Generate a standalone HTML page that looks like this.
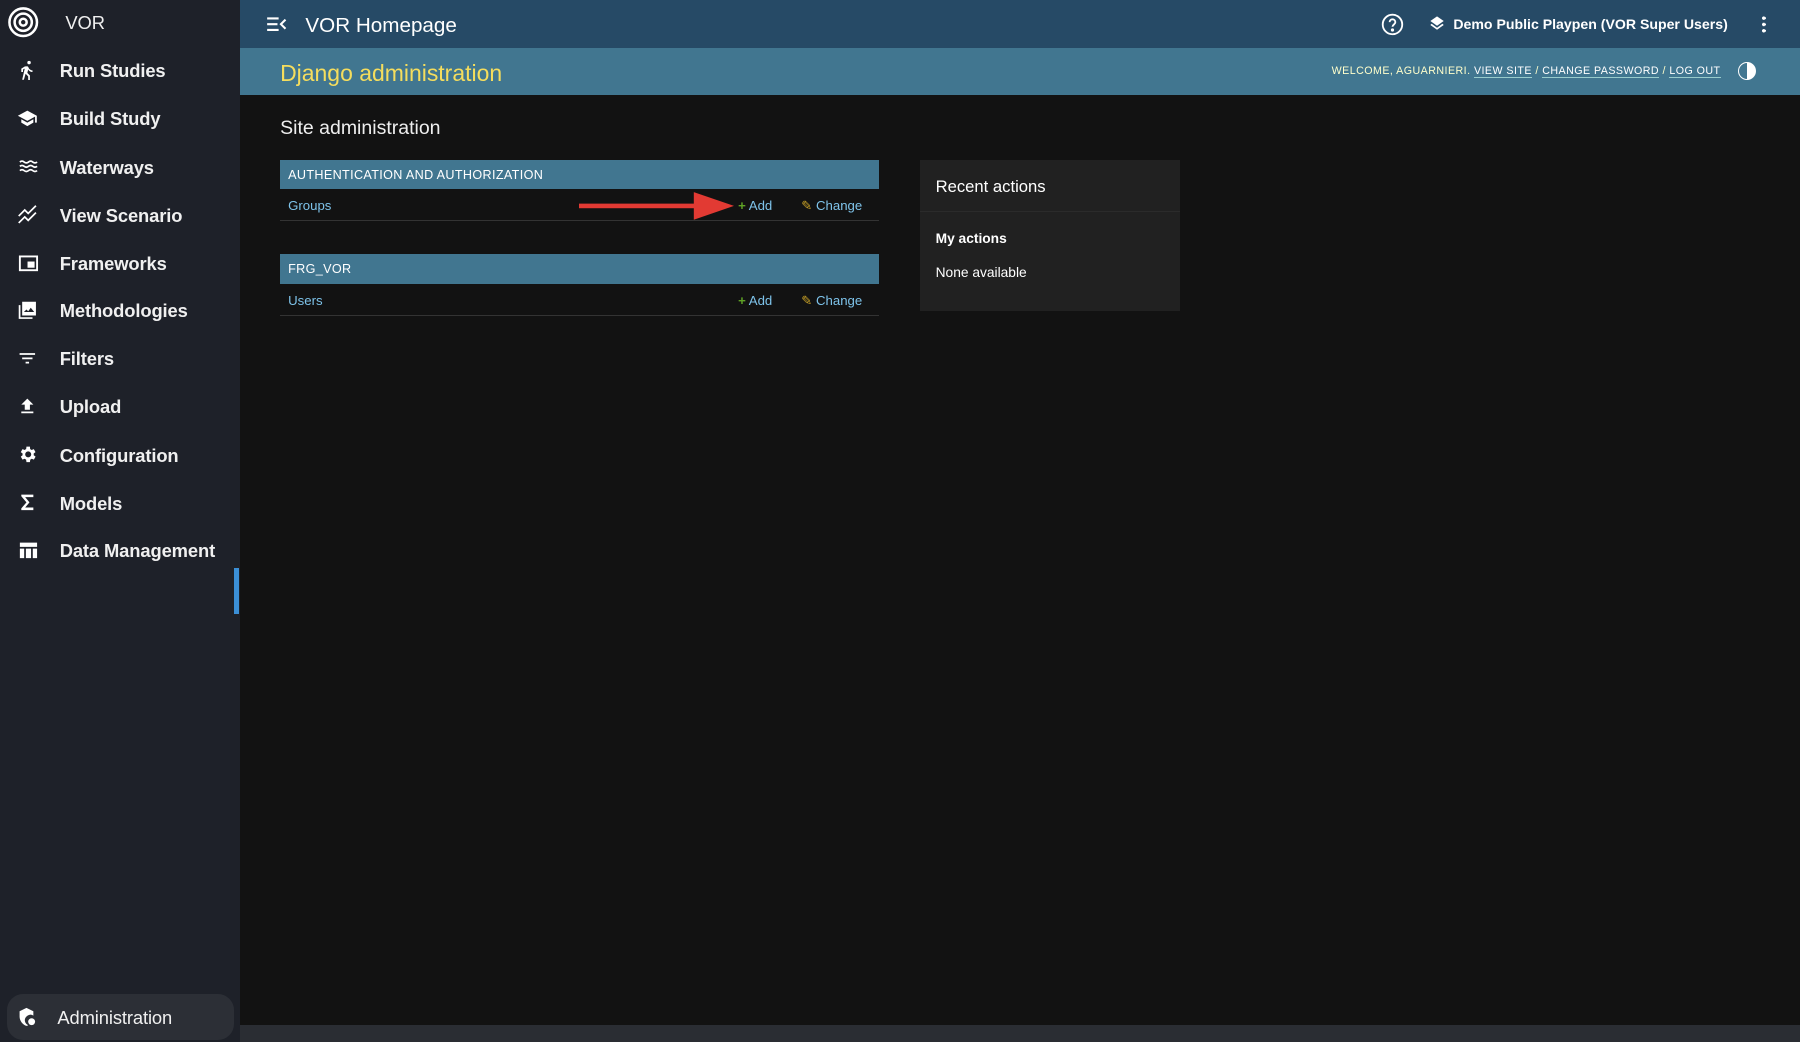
<!DOCTYPE html>
<html><head><meta charset="utf-8"><style>
html{zoom:1.148}
body{margin:0;width:1568px;height:908px;background:#121212;font-family:"Liberation Sans",sans-serif;position:relative;overflow:hidden;color:#fff}
.sb{position:absolute;left:0;top:0;width:209px;height:908px;background:#1e2129}
.it{position:absolute;left:0;height:40px;line-height:42px;font-size:16px;font-weight:bold;color:#f0f0f0;width:209px}
.it span{position:absolute;left:52px;letter-spacing:-.1px}
.it svg{position:absolute;left:15px;top:11px}
.top{position:absolute;left:209px;top:0;right:0;height:42px;background:#264a66}
.hdr{position:absolute;left:209px;top:42px;right:0;height:41px;background:#417690}
a{color:#7ec3ea;text-decoration:none}
.mod{position:absolute;left:244px;width:522px}
.cap{height:26px;line-height:27px;background:#417690;color:#fff;font-size:11px;padding-left:7px;letter-spacing:.3px}
.row{height:27px;line-height:29px;border-bottom:1px solid #333;font-size:11.5px;position:relative}
.row .n{position:absolute;left:7px}
.row .ad{position:absolute;left:643px;margin-left:-244px}
.row .ch{position:absolute;left:698px;margin-left:-244px}
.plus{color:#5fa225;font-weight:bold}
.pen{color:#c9a227}
</style></head><body>
<div class="sb">
 <div class="it" style="top:0;height:38px;line-height:40px"><svg width="30" height="30" viewBox="0 0 30 30" style="left:5px;top:4px" fill="none" stroke="#fff" stroke-width="2.2"><circle cx="15" cy="15" r="12"/><circle cx="15" cy="15" r="7.5"/><circle cx="15" cy="15" r="3"/></svg><span style="left:57px;font-weight:normal">VOR</span></div>
 <div class="it" style="top:41px"><svg width="18" height="18" viewBox="0 0 24 24" fill="#fff"><circle cx="14" cy="3" r="2"/><path d="M10 7l-5 3v4h2v-3l2-1-3 13h2l2-7 3 3v5h2v-6l-3-3 1-4c1 2 3 3 5 3v-2c-2 0-3-1-4-2l-1-2c-1-1-2-1-3 0z"/></svg><span>Run Studies</span></div>
 <div class="it" style="top:83px"><svg width="18" height="18" viewBox="0 0 24 24" fill="#fff"><path d="M12 3L1 9l11 6 9-5v7h2V9zM5 13v4l7 4 7-4v-4l-7 4z"/></svg><span>Build Study</span></div>
 <div class="it" style="top:125px"><svg width="20" height="18" viewBox="0 0 24 24" fill="none" stroke="#fff" stroke-width="2"><path d="M2 7q2.5-2 5 0t5 0 5 0 5 0M2 12q2.5-2 5 0t5 0 5 0 5 0M2 17q2.5-2 5 0t5 0 5 0 5 0"/></svg><span>Waterways</span></div>
 <div class="it" style="top:167px"><svg width="18" height="18" viewBox="0 0 24 24" fill="none" stroke="#fff" stroke-width="2"><path d="M2 14l7-7 4 4 9-9M2 22l7-7 4 4 9-9"/></svg><span>View Scenario</span></div>
 <div class="it" style="top:209px"><svg width="20" height="18" viewBox="0 0 24 24" fill="none" stroke="#fff" stroke-width="2.2"><rect x="2" y="4" width="20" height="16"/><rect x="12" y="11" width="6" height="5" fill="#fff"/></svg><span>Frameworks</span></div>
 <div class="it" style="top:250px"><svg width="18" height="18" viewBox="0 0 24 24" fill="#fff"><path d="M6 2h16v16H6zM8 14h12l-4-5-3 4-2-2zM2 6h2v14h14v2H2z"/></svg><span>Methodologies</span></div>
 <div class="it" style="top:292px"><svg width="18" height="18" viewBox="0 0 24 24" fill="#fff"><path d="M3 6h18v2H3zM6 11h12v2H6zM10 16h4v2h-4z"/></svg><span>Filters</span></div>
 <div class="it" style="top:334px"><svg width="18" height="18" viewBox="0 0 24 24" fill="#fff"><path d="M9 16h6v-6h4l-7-7-7 7h4zM5 18h14v2H5z"/></svg><span>Upload</span></div>
 <div class="it" style="top:376px"><svg width="18" height="18" viewBox="0 0 24 24" fill="#fff"><path d="M19.4 13a7.5 7.5 0 000-2l2.1-1.6-2-3.5-2.5 1a7 7 0 00-1.7-1L15 3h-4l-.4 2.9a7 7 0 00-1.7 1l-2.5-1-2 3.5L6.5 11a7.5 7.5 0 000 2l-2.1 1.6 2 3.5 2.5-1a7 7 0 001.7 1L11 21h4l.4-2.9a7 7 0 001.7-1l2.5 1 2-3.5zM13 15.5a3.5 3.5 0 110-7 3.5 3.5 0 010 7z"/></svg><span>Configuration</span></div>
 <div class="it" style="top:418px"><svg width="18" height="18" viewBox="0 0 24 24" fill="#fff"><path d="M5 3h14v3H9.5l5 6-5 6H19v3H5v-2l6-7-6-7z"/></svg><span>Models</span></div>
 <div class="it" style="top:459px"><svg width="20" height="18" viewBox="0 0 24 24" fill="#fff"><path d="M2 3h20v5H2zM2 10h5v11H2zM9 10h6v11H9zM17 10h5v11h-5z"/></svg><span>Data Management</span></div>
 <div style="position:absolute;left:204px;top:495px;width:4px;height:40px;background:#3b8fd6"></div>
 <div style="position:absolute;left:6px;top:866px;width:198px;height:40px;background:#2c2f36;border-radius:14px"></div>
 <div class="it" style="top:866px"><svg width="18" height="18" viewBox="0 0 24 24" fill="#fff" style="left:15px"><path d="M11 1L3 5v6c0 5 3.5 9.5 8 11 1-.3 1.5-.6 2-1a6 6 0 01-2-10 6 6 0 018-1V5z"/><circle cx="17" cy="17" r="4"/></svg><span style="left:50px;font-weight:normal">Administration</span></div>
</div>
<div class="top">
 <svg style="position:absolute;left:23px;top:13px" width="18" height="16" viewBox="0 0 18 16" fill="none" stroke="#fff" stroke-width="1.8"><path d="M1 3h10M1 8h9M1 13h10M17 4l-4 4 4 4"/></svg>
 <div style="position:absolute;left:57px;top:12px;font-size:18px">VOR Homepage</div>
 <svg style="position:absolute;left:994px;top:11px" width="20" height="20" viewBox="0 0 20 20" fill="none" stroke="#fff" stroke-width="1.6"><circle cx="10" cy="10" r="8.5"/><path d="M7.5 8a2.5 2.5 0 115 0c0 2-2.5 2-2.5 4"/><circle cx="10" cy="14.8" r=".6" fill="#fff"/></svg>
 <svg style="position:absolute;left:1036px;top:13px" width="14" height="14" viewBox="0 0 24 24" fill="#fff"><path d="M12 2L2 9l10 7 10-7zM4 13l-2 2 10 7 10-7-2-2-8 6z"/></svg>
 <div style="position:absolute;left:1057px;top:14px;font-size:12.3px;font-weight:bold">Demo Public Playpen (VOR Super Users)</div>
 <div style="position:absolute;left:1326px;top:13px;width:3px;height:16px;background:radial-gradient(circle,#fff 1.4px,transparent 1.6px) 0 0/3px 5.5px"></div>
</div>
<div class="hdr">
 <div style="position:absolute;left:35px;top:10px;font-size:20px;color:#f5dd5d">Django administration</div>
 <div style="position:absolute;left:951px;top:15px;font-size:9.3px;letter-spacing:.4px;color:#ffffcc">WELCOME, AGUARNIERI. <span style="color:#fff;border-bottom:1px solid #9cc">VIEW SITE</span> / <span style="color:#fff;border-bottom:1px solid #9cc">CHANGE PASSWORD</span> / <span style="color:#fff;border-bottom:1px solid #9cc">LOG OUT</span></div>
 <div style="position:absolute;left:1305px;top:12px;width:14px;height:14px;border:1.5px solid #fff;border-radius:50%;background:linear-gradient(90deg,#417690 50%,#fff 50%)"></div>
</div>
<div style="position:absolute;left:244px;top:102px;font-size:17px;color:#eee">Site administration</div>
<div class="mod" style="top:139px">
 <div class="cap">AUTHENTICATION AND AUTHORIZATION</div>
 <div class="row"><a class="n">Groups</a><a class="ad"><span class="plus">+</span> Add</a><a class="ch"><span class="pen">✎</span> Change</a></div>
</div>
<div class="mod" style="top:221px">
 <div class="cap">FRG_VOR</div>
 <div class="row"><a class="n">Users</a><a class="ad"><span class="plus">+</span> Add</a><a class="ch"><span class="pen">✎</span> Change</a></div>
</div>
<svg style="position:absolute;left:504px;top:166px" width="136" height="26"><rect x="0" y="11" width="104" height="4" fill="#e23a33"/><path d="M100 1L135 13 100 25z" fill="#e23a33"/></svg>
<div style="position:absolute;left:801px;top:139px;width:227px;height:132px;background:#212121">
 <div style="padding:15px 14px 13px;font-size:14.5px;border-bottom:1px solid #2b2b2b;height:17px">Recent actions</div>
 <div style="position:absolute;left:14px;top:62px;font-size:12px;font-weight:bold">My actions</div>
 <div style="position:absolute;left:14px;top:92px;font-size:12px">None available</div>
</div>
<div style="position:absolute;left:209px;top:893px;right:0;height:15px;background:#2a2d33"></div>
</body></html>
